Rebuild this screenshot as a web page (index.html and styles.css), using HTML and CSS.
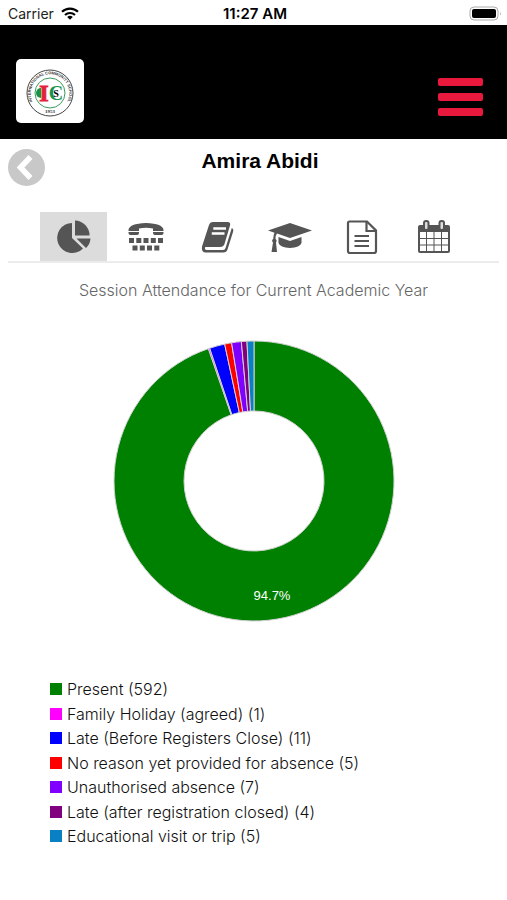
FILE: index.html
```html
<!DOCTYPE html>
<html lang="en">
<head>
    <meta charset="UTF-8">
    <meta name="viewport" content="width=device-width, initial-scale=1.0">
    <title>Amira Abidi - Attendance</title>
    <link rel="stylesheet" href="styles.css">
</head>
<body>
    <div class="status-bar">
        <div class="carrier">
            Carrier
            <svg width="18" height="13" viewBox="0 0 18 13" aria-hidden="true">
                <g fill="none" stroke="#000" stroke-width="2.2">
                    <path d="M1 4.8a11.5 11.5 0 0 1 16 0" />
                    <path d="M4 8a7.3 7.3 0 0 1 10 0" />
                </g>
                <path d="M6.2 10a4 4 0 0 1 5.6 0L9 12.8z" />
            </svg>
        </div>
        <div class="time">11:27 AM</div>
        <div class="battery">
            <svg width="33" height="15" viewBox="0 0 33 15" aria-hidden="true">
                <rect x="1" y="1" width="28" height="13" rx="4" fill="#fff" stroke="#aaa" />
                <rect x="3" y="3" width="24" height="9" rx="2" />
                <path d="M31 5.5q1.5 2 0 4z" fill="#aaa" />
            </svg>
        </div>
    </div>

    <header class="header">
        <a class="logo" href="#" aria-label="International Community School">
            <svg width="64" height="64" viewBox="0 0 64 64">
                <defs>
                    <path id="ring" d="M14.6 42.5A19.2 19.2 0 1 1 49.4 42.5" />
                </defs>
                <circle cx="32" cy="34" r="23" fill="none" stroke="#444" />
                <circle cx="32" cy="34" r="15" fill="none" stroke="#3a9b5c" />
                <text class="logo-ring"><textPath href="#ring" startOffset="50%">INTERNATIONAL COMMUNITY SCHOOL</textPath></text>
                <path d="M23 29a5 5 0 0 0 0 10z" fill="#15934a" />
                <text class="logo-c" x="38" y="41">C</text>
                <text class="logo-i" x="26" y="42">I</text>
                <text class="logo-s" x="38" y="38">S</text>
                <text class="logo-year" x="32" y="54">1953</text>
            </svg>
        </a>
        <button class="menu-button" aria-label="Menu">
            <span></span>
            <span></span>
            <span></span>
        </button>
    </header>

    <main>
        <div class="title-row">
            <button class="back-button" aria-label="Back">
                <svg width="37" height="37" viewBox="0 0 37 37">
                    <circle cx="18.5" cy="18.5" r="18.5" fill="#c8c8c8" />
                    <path d="M22.5 8L12.5 18.5L22.5 29" fill="none" stroke="#fff" stroke-width="5.5" />
                </svg>
            </button>
            <h1>Amira Abidi</h1>
        </div>

        <nav class="tabs">
            <button class="tab active" aria-label="Attendance">
                <svg width="36" height="36" viewBox="0 0 36 36">
                    <path d="M16 4A15 15 0 1 0 27 29.4L16 19z" />
                    <path d="M19 1.5A15 15 0 0 1 33.5 16.5H19z" />
                    <path d="M20.5 19.5H34.5A14 14 0 0 1 30 29z" />
                </svg>
            </button>
            <button class="tab" aria-label="Contacts">
                <svg width="36" height="36" viewBox="0 0 36 36">
                    <path d="M.5 11Q1 4.5 18 4Q35 4.5 35.5 11V12H25V9.5Q18 8 11 9.5V12H.5z" />
                    <path d="M.5 13H11V14Q11 16 9 16H2.5Q.5 16 .5 14zM25 13H35.5V14Q35.5 16 33.5 16H27Q25 16 25 14z" />
                    <path d="M1 19h5v5H1zM8.3 19h5v5h-5zM15.5 19h5v5h-5zM22.8 19h5v5h-5zM30 19h5v5h-5zM4.5 26.5h5v5h-5zM11.8 26.5h5v5h-5zM19 26.5h5v5h-5zM26.3 26.5h5v5h-5z" />
                </svg>
            </button>
            <button class="tab" aria-label="Homework">
                <svg width="36" height="36" viewBox="0 0 36 36">
                    <path d="M13 3H27.5Q31 3 30 6.500L24.500 25Q23.500 28 20 28H5.500Q4.500 28.500 5 30Q5.300 31 7 31H23Q25 31 25.700 28.500L31.800 9Q34 10 33 13L27.500 30.500Q26.500 33.500 23.500 33.500H6Q1 33.500 2 27.500L9 6Q10 3 13 3z" />
                    <path d="M13.300 9.500H26M11.800 14.500H24.500" fill="none" stroke="#fff" stroke-width="2.4" />
                </svg>
            </button>
            <button class="tab" aria-label="Results">
                <svg width="44" height="36" viewBox="0 0 44 36">
                    <path d="M22 4L44 11.5L22 19L9 14.5Q7.500 16 7.500 20Q9.500 21.5 8 23.5L9 33H3.500L5 23.5Q3 21.500 5.200 20Q5.300 16 6.500 13.700L0 11.5z" />
                    <path d="M10.500 18L22 22L33.500 18V24Q32 28.500 22 29Q12 28.500 10.500 24z" />
                </svg>
            </button>
            <button class="tab" aria-label="Reports">
                <svg width="36" height="36" viewBox="0 0 36 36">
                    <g fill="none" stroke="#555" stroke-width="2.2">
                        <path d="M5.5 2.500H23L32 11.500V32Q32 34 30 34H6Q4 34 4 32V4Q4 2.500 5.500 2.500z" />
                        <path d="M22.500 2.500V12H32" />
                        <path d="M10.500 17H25M10.500 22H25M10.500 27H25" />
                    </g>
                </svg>
            </button>
            <button class="tab" aria-label="Calendar">
                <svg width="36" height="36" viewBox="0 0 36 36">
                    <path d="M4 6H32Q34 6 34 8V32Q34 34 32 34H4Q2 34 2 32V8Q2 6 4 6zM4 13V32H32V13z" fill-rule="evenodd" />
                    <path d="M10.5 13V32M18 13V32M25.5 13V32M4 19.5H32M4 26H32" fill="none" stroke="#555" />
                    <g fill="#ddd" stroke="#555" stroke-width="2">
                        <rect x="8" y="2" width="4.5" height="9" rx="2" />
                        <rect x="23.5" y="2" width="4.5" height="9" rx="2" />
                    </g>
                </svg>
            </button>
        </nav>

        <section class="attendance">
            <h2>Session Attendance for Current Academic Year</h2>
            <svg id="chart" class="chart" viewBox="0 0 282 282" role="img" aria-label="Session attendance">
                <g id="slices"></g>
                <text x="159" y="260">94.7%</text>
            </svg>
            <ul class="legend">
                <li><span class="key present"></span>Present (592)</li>
                <li><span class="key holiday"></span>Family Holiday (agreed) (1)</li>
                <li><span class="key late-before"></span>Late (Before Registers Close) (11)</li>
                <li><span class="key no-reason"></span>No reason yet provided for absence (5)</li>
                <li><span class="key unauthorised"></span>Unauthorised absence (7)</li>
                <li><span class="key late-after"></span>Late (after registration closed) (4)</li>
                <li><span class="key visit"></span>Educational visit or trip (5)</li>
            </ul>
        </section>
    </main>

    <script src="chart.js"></script>
</body>
</html>
```

FILE: styles.css
```css
* {
    box-sizing: border-box;
}
body {
    margin: 0;
    background-color: #fff;
    color: #000;
    font-family: "Liberation Sans", Arial, sans-serif;
}
button {
    border: none;
    padding: 0;
    background: none;
    cursor: pointer;
}
svg {
    display: block;
}

/* status bar */
.status-bar {
    display: grid;
    grid-template-columns: 1fr auto 1fr;
    align-items: center;
    height: 25px;
    padding: 2px 5px 0 8px;
    font-family: Inter, sans-serif;
    font-size: 14px;
}
.carrier {
    display: flex;
    align-items: center;
    gap: 7px;
    color: #222;
}
.time {
    font-size: 15px;
    font-weight: 600;
}
.battery {
    justify-self: end;
}

/* header */
.header {
    display: flex;
    justify-content: space-between;
    align-items: center;
    height: 114px;
    padding: 18px 24px 0 16px;
    background-color: #000;
}
.logo {
    display: flex;
    justify-content: center;
    width: 68px;
    border-radius: 5px;
    background-color: #fff;
}
.logo text {
    text-anchor: middle;
    font-family: "Liberation Serif", serif;
    font-weight: bold;
}
.logo .logo-ring {
    font-family: "Liberation Sans", sans-serif;
    font-size: 4px;
    fill: #333;
}
.logo-c {
    font-size: 20px;
    fill: #15934a;
}
.logo-i {
    font-size: 24px;
    fill: #e2233b;
    stroke: #e2233b;
}
.logo-s {
    font-size: 10px;
    fill: #000;
}
.logo-year {
    font-size: 5px;
    fill: #333;
}
.menu-button {
    display: flex;
    flex-direction: column;
    gap: 7px;
    width: 45px;
    padding-top: 11px;
}
.menu-button span {
    height: 8px;
    border-radius: 2px;
    background-color: #e8193c;
}

/* title */
.title-row {
    display: grid;
    grid-template-columns: 37px 1fr 24px;
    padding: 10px 8px 0;
}
.back-button {
    height: 37px;
}
h1 {
    margin: 0;
    font-size: 21px;
    line-height: 24px;
    text-align: center;
}

/* tabs */
.tabs {
    display: flex;
    justify-content: center;
    gap: 5px;
    margin: 26px 8px 0;
    border-bottom: 2px solid #ececec;
}
.tab {
    display: flex;
    justify-content: center;
    align-items: center;
    width: 67px;
    height: 49px;
    fill: #555;
}
.tab.active {
    background-color: #dcdcdc;
}

/* attendance */
h2 {
    margin: 16px 0 0;
    color: #666;
    font-family: Inter, sans-serif;
    font-size: 16px;
    font-weight: 300;
    line-height: 22px;
    text-align: center;
}
.chart {
    width: 282px;
    margin: 39px auto 0;
}
.chart path {
    stroke: #d3d3d3;
}
.chart text {
    fill: #fff;
    font-size: 13px;
    text-anchor: middle;
}
.legend {
    display: grid;
    align-content: space-between;
    min-height: 171px;
    margin: 55px 0 0 50px;
    padding: 0;
    list-style: none;
    color: #111;
    font-family: Inter, sans-serif;
    font-size: 16px;
    font-weight: 300;
    line-height: 24px;
}
.legend li {
    display: flex;
    align-items: center;
    gap: 5px;
}
.key {
    width: 12px;
    height: 12px;
}
.present {
    background-color: #008000;
}
.holiday {
    background-color: #ff00ff;
}
.late-before {
    background-color: #0000ff;
}
.no-reason {
    background-color: #ff0000;
}
.unauthorised {
    background-color: #8000ff;
}
.late-after {
    background-color: #800080;
}
.visit {
    background-color: #0a80c4;
}
```

FILE: chart.js
```js
const sessions = [
    { count: 592, color: '#008000' },
    { count: 1, color: '#ff00ff' },
    { count: 11, color: '#0000ff' },
    { count: 5, color: '#ff0000' },
    { count: 7, color: '#8000ff' },
    { count: 4, color: '#800080' },
    { count: 5, color: '#0a80c4' }
];

const center = 141;
const outer = 140;
const inner = 70;
const total = sessions.reduce((sum, s) => sum + s.count, 0);
const slices = document.getElementById('slices');

function point(radius, count) {
    const angle = count / total * 2 * Math.PI;
    return `${center + radius * Math.sin(angle)} ${center - radius * Math.cos(angle)}`;
}

let start = 0;
sessions.forEach(({ count, color }) => {
    const end = start + count;
    const large = count > total / 2 ? 1 : 0;
    const path = document.createElementNS('http://www.w3.org/2000/svg', 'path');
    path.setAttribute('d', `M${point(outer, start)} A${outer} ${outer} 0 ${large} 1 ${point(outer, end)}
        L${point(inner, end)} A${inner} ${inner} 0 ${large} 0 ${point(inner, start)} Z`);
    path.setAttribute('fill', color);
    slices.appendChild(path);
    start = end;
});
```
